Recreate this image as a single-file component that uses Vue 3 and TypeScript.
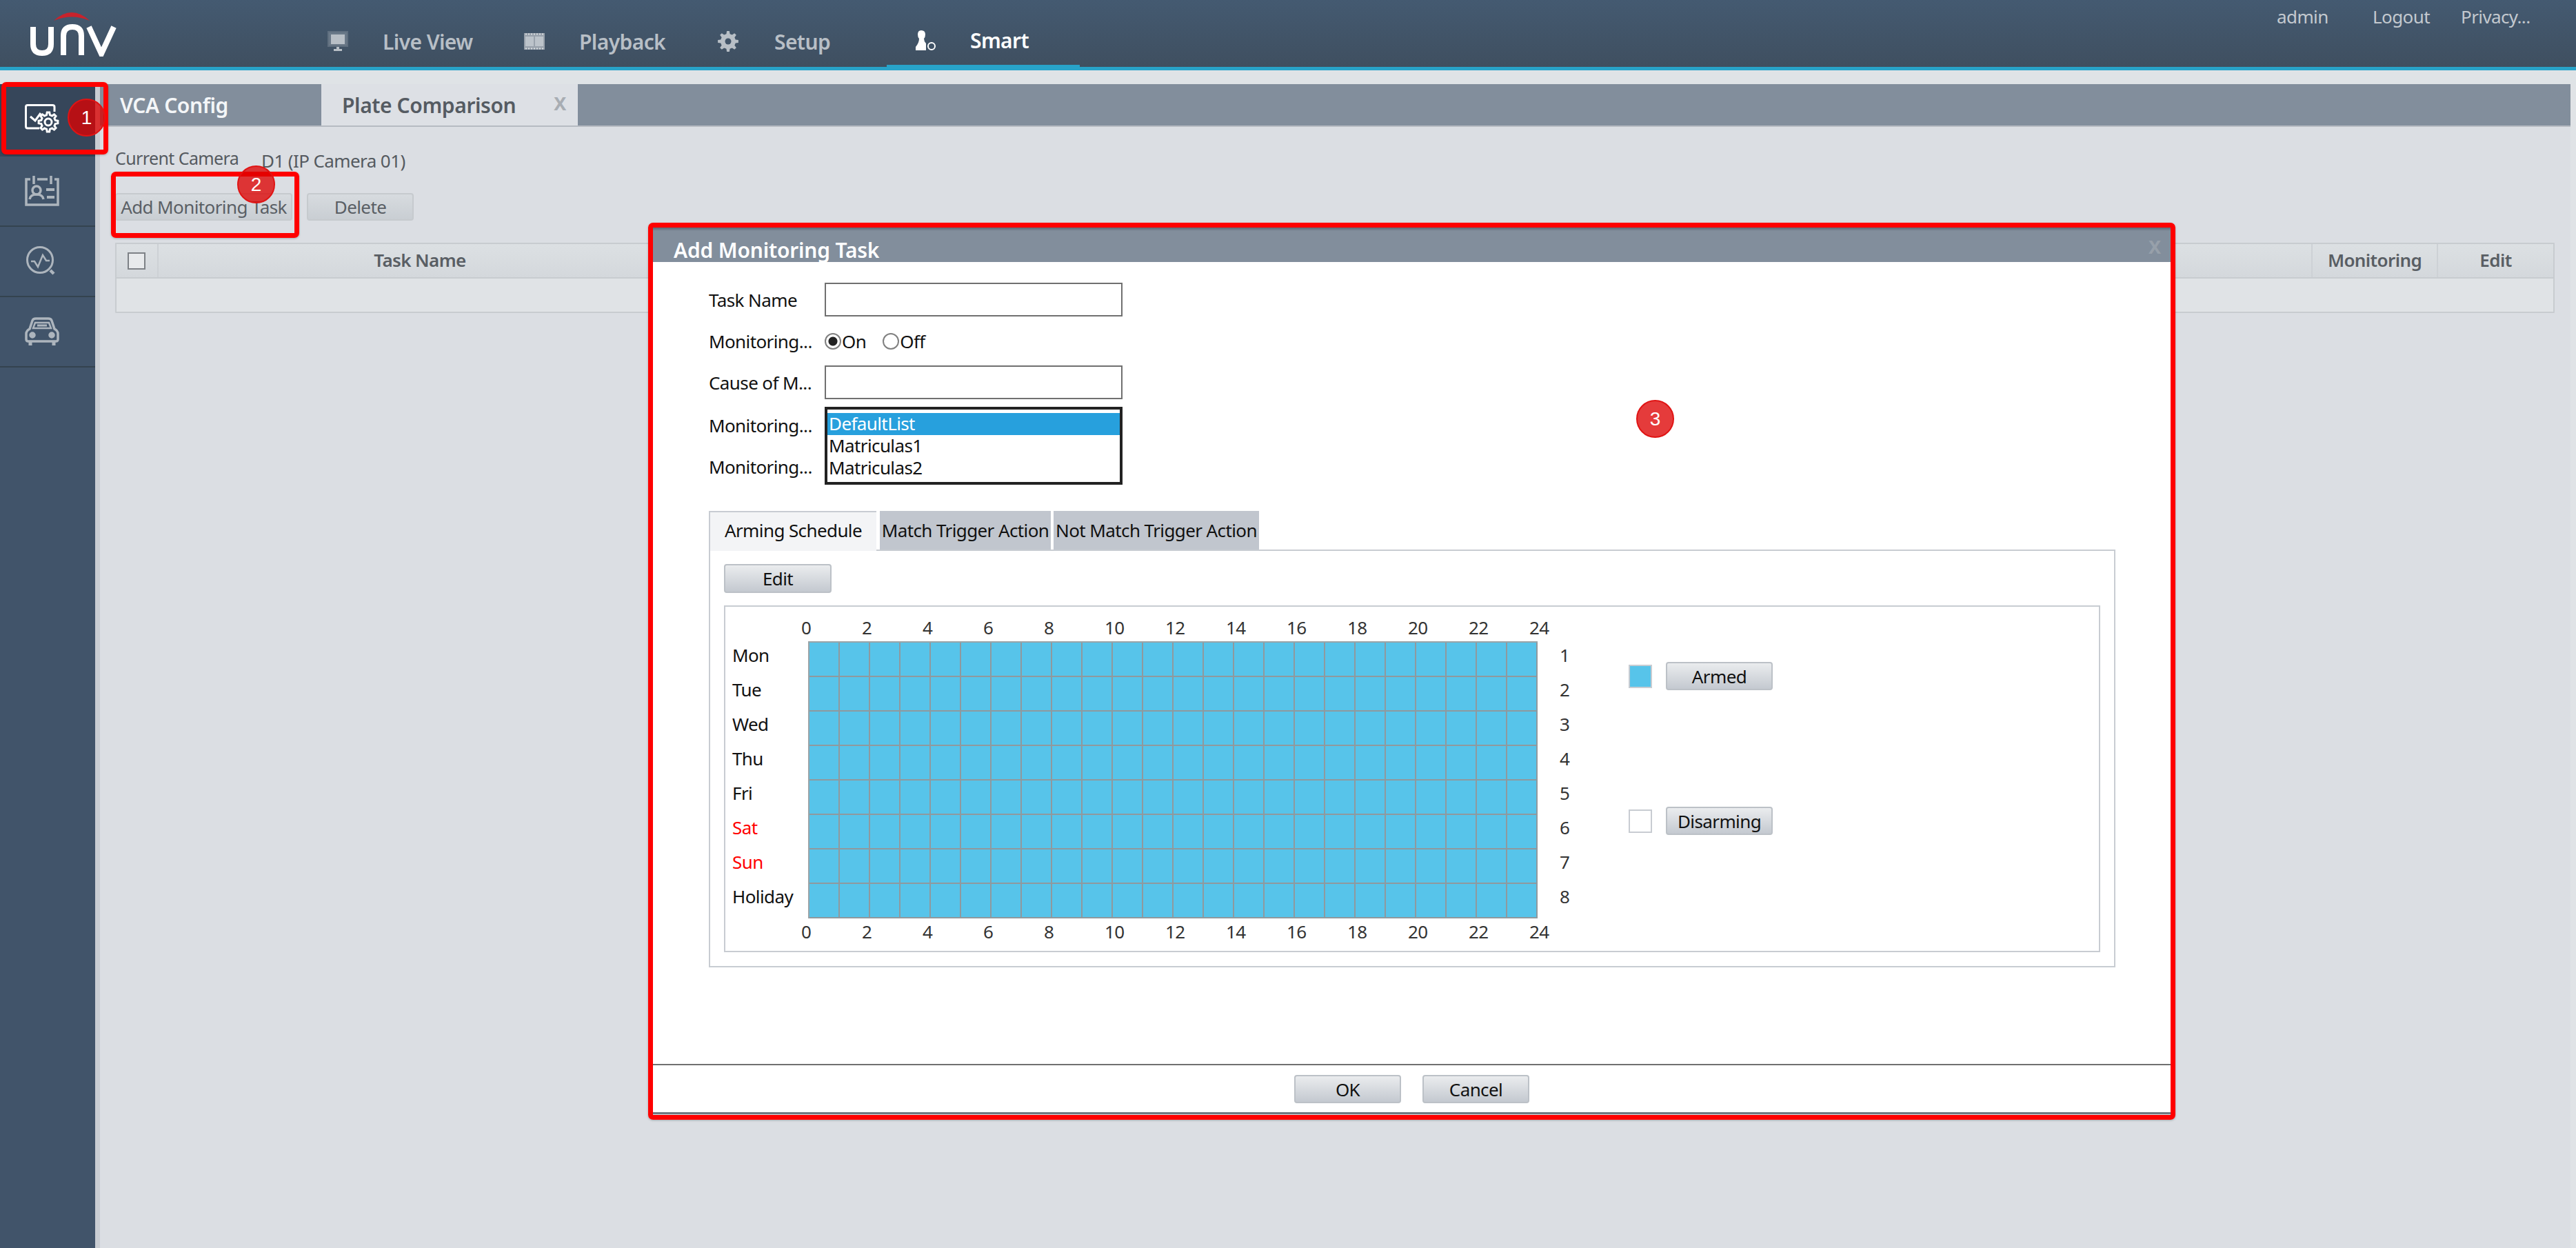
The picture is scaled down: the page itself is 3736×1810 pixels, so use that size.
<script setup lang="ts">
const days = [
  { name: "Mon", red: false },
  { name: "Tue", red: false },
  { name: "Wed", red: false },
  { name: "Thu", red: false },
  { name: "Fri", red: false },
  { name: "Sat", red: true },
  { name: "Sun", red: true },
  { name: "Holiday", red: false },
];
const hours = [0, 2, 4, 6, 8, 10, 12, 14, 16, 18, 20, 22, 24];
const cellCount = 24 * 8;

// toothed outline for the gear icons
const gearPath = (cx: number, cy: number, outer: number, inner: number, teeth: number) => {
  const pts: string[] = [];
  const step = (Math.PI * 2) / teeth;
  for (let i = 0; i < teeth; i++) {
    const a = i * step;
    const spots: [number, number][] = [
      [a - step * 0.3, inner],
      [a - step * 0.16, outer],
      [a + step * 0.16, outer],
      [a + step * 0.3, inner],
    ];
    for (const [ang, r] of spots) {
      pts.push(`${(cx + Math.cos(ang) * r).toFixed(2)} ${(cy + Math.sin(ang) * r).toFixed(2)}`);
    }
  }
  return `M${pts.join("L")}Z`;
};
</script>

<template>
  <div class="page">
    <header class="topbar">
      <div class="logo" aria-label="UNV logo">
        <svg width="126" height="64" viewBox="0 0 126 64">
          <path d="M35 12Q61 -12 87 12Q61 1 35 12Z" fill="#c8232c" />
          <path
            d="M5 21V46Q5 59 18 59Q31 59 31 46V21M49 62V34Q49 21 62 21Q75 21 75 34V62M86 21L104 60L122 21"
            fill="none"
            stroke="#fff"
            stroke-width="8"
          />
        </svg>
      </div>
      <nav class="nav">
        <a class="nav-item live">
          <svg width="30" height="30" viewBox="0 0 30 30">
            <path d="M1 1H29V22H1Z" fill="#e4e7ea" opacity=".25" stroke="#b8bfc6" stroke-width="2" />
            <path d="M5 5H25V19H5Z" fill="#b8bfc6" />
            <path d="M13 23H17V26H21V29H9V26H13Z" fill="#b8bfc6" />
          </svg>
          <span>Live View</span>
        </a>
        <a class="nav-item play">
          <svg width="30" height="24" viewBox="0 0 30 24">
            <path d="M0 0H30V24H0Z" fill="#99a2ac" />
            <path d="M2 5H14V19H2ZM16 5H28V19H16Z" fill="#bcc3ca" />
            <path d="M2 1.500H28M2 22.500H28" stroke="#d8dce0" stroke-width="2" stroke-dasharray="2 2" />
          </svg>
          <span>Playback</span>
        </a>
        <a class="nav-item setup">
          <svg width="30" height="30" viewBox="0 0 30 30">
            <path :d="gearPath(15, 15, 15, 11, 8)" fill="#b8bfc6" />
            <circle cx="15" cy="15" r="4.500" fill="#425468" />
          </svg>
          <span>Setup</span>
        </a>
        <a class="nav-item smart">
          <svg width="30" height="30" viewBox="0 0 30 30">
            <path d="M8 0Q14 0 14 6Q14 10 12 12Q12 16 15 19V29H0V24Q5 18 5 12Q3 10 3 6Q3 0 8 0Z" fill="#fff" />
            <circle cx="23" cy="23" r="5" fill="none" stroke="#fff" stroke-width="2" />
          </svg>
          <span>Smart</span>
        </a>
      </nav>
      <div class="user-links">
        <span class="admin">admin</span>
        <span class="logout">Logout</span>
        <span class="privacy">Privacy...</span>
      </div>
    </header>

    <div class="body">
      <aside class="sidebar">
        <div class="side-item active">
          <svg width="50" height="42" viewBox="0 0 50 42" fill="none" stroke="#fff" stroke-width="3">
            <path d="M21 35H4Q1.500 35 1.500 32V4Q1.500 1.500 4 1.500H40Q43 1.500 43 4V11" />
            <path d="M8 18L15 24L23 13" />
            <path :d="gearPath(34, 26, 14, 10.500, 8)" fill="#36465a" />
            <circle cx="34" cy="26" r="5" />
          </svg>
        </div>
        <div class="side-item">
          <svg width="50" height="44" viewBox="0 0 50 44" fill="none" stroke="#adb5bd" stroke-width="3.500">
            <path d="M8 5H2V42H48V5H43" />
            <path d="M13 0V12M38 0V12M18 5H33" />
            <circle cx="17" cy="21" r="6" />
            <path d="M7 34Q8 27 17 27Q26 27 27 34" />
            <path d="M31 20H43M32 31H43" stroke-width="4" />
          </svg>
        </div>
        <div class="side-item">
          <svg width="46" height="44" viewBox="0 0 46 44" fill="none" stroke="#adb5bd" stroke-width="3">
            <circle cx="20" cy="20" r="18.500" />
            <path d="M7 22H12L17 30L24 13L29 21H34" stroke-width="2.500" />
            <path d="M35 35L40 40" stroke-width="4.500" />
          </svg>
        </div>
        <div class="side-item">
          <svg width="50" height="42" viewBox="0 0 50 42" fill="none" stroke="#adb5bd" stroke-width="3.500">
            <path d="M2 32V24Q2 20 7 17L11 5Q12 2 16 2H34Q38 2 39 5L43 17Q48 20 48 24V32Q48 35 45 35H5Q2 35 2 32Z" />
            <path d="M12 16L15 8H35L38 16Z" stroke-width="2.500" />
            <path d="M18 12H32" stroke-width="3" />
            <circle cx="11" cy="26" r="3" fill="#adb5bd" />
            <circle cx="39" cy="26" r="3" fill="#adb5bd" />
            <path d="M8 36V41M42 36V41" stroke-width="5" />
          </svg>
        </div>
      </aside>

      <main class="main">
        <div class="tabbar">
          <div class="tab first">VCA Config</div>
          <div class="tab current">
            <span>Plate Comparison</span>
            <span class="tab-x">X</span>
          </div>
        </div>
        <div class="content">
          <div class="camera-row">
            <span class="cam-label">Current Camera</span>
            <span class="cam-value">D1 (IP Camera 01)</span>
          </div>
          <div class="action-row">
            <button class="btn page-btn add">Add Monitoring Task</button>
            <button class="btn page-btn del">Delete</button>
          </div>
          <div class="table">
            <div class="thead">
              <div class="th check-col"><i class="checkbox" /></div>
              <div class="th name-col">Task Name</div>
              <div class="th spacer-col" />
              <div class="th mon-col">Monitoring</div>
              <div class="th edit-col">Edit</div>
            </div>
            <div class="tbody" />
          </div>
        </div>
      </main>
    </div>

    <section class="dialog">
      <div class="dialog-title">
        <span>Add Monitoring Task</span>
        <span class="dialog-x">X</span>
      </div>
      <div class="dialog-body">
        <div class="form-row">
          <label>Task Name</label>
          <div class="input" />
        </div>
        <div class="form-row radio-row">
          <label>Monitoring...</label>
          <span class="radio on" /><span class="radio-text">On</span>
          <span class="radio off" /><span class="radio-text">Off</span>
        </div>
        <div class="form-row">
          <label>Cause of M...</label>
          <div class="input" />
        </div>
        <div class="form-row list-row">
          <div class="list-labels">
            <label>Monitoring...</label>
            <label>Monitoring...</label>
          </div>
          <div class="listbox">
            <div class="opt selected">DefaultList</div>
            <div class="opt">Matriculas1</div>
            <div class="opt">Matriculas2</div>
          </div>
        </div>

        <div class="inner-tabs">
          <div class="inner-tab active">Arming Schedule</div>
          <div class="inner-tab match">Match Trigger Action</div>
          <div class="inner-tab notmatch">Not Match Trigger Action</div>
        </div>
        <div class="panel">
          <button class="btn edit-btn">Edit</button>
          <div class="schedule">
            <div class="hours top">
              <span v-for="h in hours" :key="h">{{ h }}</span>
            </div>
            <div class="day-col">
              <div v-for="d in days" :key="d.name" :class="['day', { red: d.red }]">{{ d.name }}</div>
            </div>
            <div class="cells">
              <div v-for="n in cellCount" :key="n" class="cell" />
            </div>
            <div class="num-col">
              <div v-for="n in 8" :key="n" class="num">{{ n }}</div>
            </div>
            <div class="legend">
              <div class="legend-row">
                <span class="swatch armed" />
                <button class="btn legend-btn">Armed</button>
              </div>
              <div class="legend-row">
                <span class="swatch" />
                <button class="btn legend-btn">Disarming</button>
              </div>
            </div>
            <div class="hours bottom">
              <span v-for="h in hours" :key="h">{{ h }}</span>
            </div>
          </div>
        </div>
      </div>
      <div class="dialog-footer">
        <button class="btn foot-btn">OK</button>
        <button class="btn foot-btn">Cancel</button>
      </div>
    </section>

    <!-- tutorial markers drawn over the screenshot -->
    <div class="mark box-1" />
    <div class="mark box-2" />
    <div class="mark box-3" />
    <div class="dot dot-1">1</div>
    <div class="dot dot-2">2</div>
    <div class="dot dot-3">3</div>
  </div>
</template>

<style scoped>
.page {
  position: relative;
  width: 3736px;
  height: 1810px;
  display: flex;
  flex-direction: column;
  background: #dfe3e6;
  font-family: "Noto Sans", "Open Sans", sans-serif;
  font-size: 26px;
  letter-spacing: -0.6px;
  color: #111;
  overflow: hidden;
}

.topbar {
  position: relative;
  flex: none;
  height: 97px;
  border-bottom: 5px solid #28a3c9;
  background: linear-gradient(#445a71, #3f4f60);
  display: flex;
}
.logo {
  width: 475px;
  padding: 18px 0 0 43px;
  box-sizing: border-box;
}
.nav {
  display: flex;
  flex: 1;
  align-items: stretch;
}
.nav-item {
  display: flex;
  align-items: center;
  font-size: 30px;
  font-weight: 600;
  color: #b8bfc6;
  height: 97px;
  box-sizing: border-box;
  padding-top: 23px;
}
.nav-item svg {
  flex: none;
}
.nav-item span {
  margin-left: 50px;
}
.live { width: 285px; }
.play { width: 281px; }
.setup { width: 245px; }
.setup span { margin-left: 52px; }
.smart {
  color: #fff;
  border-bottom: 3px solid #28a3c9;
  padding-left: 42px;
  width: 280px;
}
.smart span { margin-left: 49px; }

.user-links {
  position: absolute;
  top: 6px;
  left: 3302px;
  display: flex;
  color: #c3c9cf;
  font-size: 26px;
}
.admin { width: 139px; }
.logout { width: 128px; }

.body {
  flex: 1;
  display: flex;
  padding-top: 20px;
  min-height: 0;
}
.sidebar {
  width: 138px;
  flex: none;
  background: #41546a;
}
.side-item {
  height: 100px;
  border-bottom: 2px solid #34434f;
  display: flex;
  align-items: center;
  justify-content: center;
  padding-right: 16px;
}
.side-item.active {
  height: 105px;
  background: #36465a;
  border-bottom: none;
  padding-bottom: 6px;
  box-sizing: border-box;
}
.main {
  flex: 1;
  display: flex;
  flex-direction: column;
  border-left: 7px solid #c9cdd3;
  border-right: 8px solid #e0e3e6;
  background: #dbdee3;
}
.tabbar {
  display: flex;
  height: 60px;
  background: #828e9c;
  border-bottom: 2px solid #b6bbc2;
  flex: none;
}
.tab {
  display: flex;
  align-items: center;
  font-size: 30px;
  font-weight: 600;
  letter-spacing: -0.4px;
}
.tab.first {
  width: 321px;
  padding-left: 29px;
  box-sizing: border-box;
  color: #f4f6f8;
}
.tab.current {
  width: 372px;
  padding-left: 30px;
  box-sizing: border-box;
  background: #dde0e5;
  color: #555b62;
}
.tab-x {
  margin-left: 55px;
  margin-bottom: 6px;
  color: #a8adb3;
  font-weight: 700;
  font-size: 27px;
}
.content {
  padding: 0 23px 0 22px;
  color: #555a60;
}
.camera-row {
  display: flex;
  height: 96px;
  font-size: 25px;
  padding-top: 28px;
  box-sizing: border-box;
}
.cam-label { width: 212px; }
.cam-value { margin-top: 3px; font-size: 26px; }
.action-row {
  display: flex;
  gap: 21px;
}
.btn {
  font: inherit;
  letter-spacing: inherit;
  padding: 0;
  box-sizing: border-box;
  border: 2px solid #bcc1c7;
  border-radius: 4px;
  background: linear-gradient(#eaecee, #c4c9d0);
  color: #111;
}
.page-btn {
  height: 40px;
  color: #5a5f65;
  background: linear-gradient(#d7dbdf, #c9ced3);
  border-color: #c6cace;
}
.add { width: 257px; }
.del { width: 155px; }

.table {
  margin-top: 32px;
  border: 2px solid #c8ccd0;
  border-radius: 1px;
}
.thead {
  display: flex;
  height: 48px;
  background: linear-gradient(#dce0e3, #d4d8dc);
  border-bottom: 2px solid #c8ccd0;
  font-weight: 600;
  color: #595e64;
}
.th {
  display: flex;
  align-items: center;
  justify-content: center;
  box-sizing: border-box;
  border-right: 2px solid #cdd1d5;
  padding-bottom: 2px;
}
.th:last-child { border-right: none; }
.check-col { width: 61px; justify-content: flex-start; padding-left: 16px; padding-bottom: 0; }
.name-col { width: 760px; }
.spacer-col { flex: 1; }
.mon-col { width: 182px; }
.edit-col { width: 167px; }
.checkbox {
  width: 26px;
  height: 25px;
  box-sizing: border-box;
  border: 2px solid #7d8186;
  background: #e8eaec;
}
.tbody {
  height: 48px;
  background: #e0e3e6;
}

.dialog {
  position: absolute;
  left: 947px;
  top: 330px;
  width: 2201px;
  height: 1286px;
  display: flex;
  flex-direction: column;
  background: #fff;
  border-bottom: 3px solid #6f7780;
  box-sizing: border-box;
}
.dialog-title {
  flex: none;
  height: 50px;
  background: linear-gradient(#5c6876 0, #828e9c 5px);
  color: #fff;
  font-size: 30px;
  font-weight: 600;
  letter-spacing: -0.2px;
  display: flex;
  justify-content: space-between;
  align-items: flex-end;
  padding: 0 14px 0 30px;
  line-height: 34px;
}
.dialog-x {
  color: #97a0aa;
  margin-bottom: 5px;
  font-size: 27px;
  font-weight: 700;
}
.dialog-body {
  flex: 1;
  padding: 30px 80px 0 81px;
  min-height: 0;
}
.form-row {
  display: flex;
  align-items: center;
  height: 49px;
}
.form-row label {
  width: 168px;
  flex: none;
  white-space: nowrap;
}
.input {
  width: 432px;
  height: 49px;
  box-sizing: border-box;
  border: 2px solid #707070;
}
.radio-row {
  height: 71px;
}
.radio {
  width: 24px;
  height: 24px;
  box-sizing: border-box;
  border: 2px solid #808080;
  border-radius: 50%;
  display: block;
}
.radio.on {
  background: radial-gradient(circle, #222 0 6px, #fff 7px);
}
.radio.off {
  margin-left: 24px;
}
.radio-text {
  margin-left: 1px;
}
.list-row {
  margin-top: 11px;
  height: 113px;
  align-items: flex-start;
}
.list-labels {
  display: flex;
  flex-direction: column;
  margin-top: -3px;
}
.list-labels label {
  height: 60px;
  line-height: 60px;
}
.listbox {
  width: 432px;
  height: 113px;
  box-sizing: border-box;
  border: 4px solid #222;
  padding-top: 5px;
  overflow: hidden;
}
.opt {
  height: 32px;
  line-height: 31px;
  padding-left: 2px;
}
.opt.selected {
  background: #27a0dd;
  color: #fff;
}
.inner-tabs {
  display: flex;
  margin-top: 38px;
  height: 56px;
}
.inner-tab {
  display: flex;
  align-items: center;
  justify-content: center;
  box-sizing: border-box;
  background: #c1c6ce;
  white-space: nowrap;
  font-size: 26px;
}
.inner-tab.active {
  width: 243px;
  background: #f3f4f6;
  border: 2px solid #c8ccd2;
  border-bottom: none;
  border-right: none;
  position: relative;
  z-index: 1;
  margin-bottom: -2px;
  height: 58px;
  padding-bottom: 4px;
}
.match { width: 248px; margin-left: 5px; }
.notmatch { width: 298px; margin-left: 4px; }
.panel {
  height: 606px;
  box-sizing: border-box;
  border: 2px solid #c8ccd2;
  padding: 19px 20px 20px;
}
.edit-btn {
  display: block;
  width: 156px;
  height: 42px;
}
.schedule {
  margin-top: 18px;
  height: 503px;
  box-sizing: border-box;
  border: 2px solid #c8ccd2;
  padding-left: 10px;
  display: grid;
  grid-template-columns: 110px 1058px 132px 1fr;
  grid-template-rows: 50px 402px 49px;
}
.hours {
  grid-column: 2 / 4;
  display: flex;
  margin-left: -10px;
  color: #333;
}
.hours span {
  flex: none;
  width: 88px;
}
.hours.top {
  grid-row: 1;
  padding-top: 12px;
  line-height: 36px;
}
.hours.bottom {
  grid-row: 3;
  line-height: 38px;
}
.day-col {
  grid-row: 2;
  grid-column: 1;
}
.day {
  height: 50px;
  line-height: 40px;
}
.day.red { color: #f00; }
.cells {
  grid-row: 2;
  grid-column: 2;
  display: grid;
  grid-template-columns: repeat(24, 44px);
  grid-auto-rows: 50px;
  border-left: 2px solid #9aa4a8;
  border-top: 2px solid #9aa4a8;
}
.cell {
  box-sizing: border-box;
  background: #57c4ea;
  border-right: 2px solid #8f999e;
  border-bottom: 2px solid #8f999e;
}
.num-col {
  grid-row: 2;
  grid-column: 3;
  padding-left: 32px;
  color: #333;
}
.num {
  height: 50px;
  line-height: 40px;
}
.legend {
  grid-row: 1 / 4;
  grid-column: 4;
  padding-top: 80px;
  display: flex;
  flex-direction: column;
  gap: 169px;
}
.legend-row {
  display: flex;
  align-items: center;
  gap: 20px;
}
.swatch {
  width: 34px;
  height: 34px;
  box-sizing: border-box;
  border: 2px solid #c8ccd2;
  background: #fff;
}
.swatch.armed { background: #57c4ea; }
.legend-btn {
  width: 155px;
  height: 41px;
}
.dialog-footer {
  flex: none;
  height: 70px;
  border-top: 2px solid #707070;
  display: flex;
  justify-content: center;
  gap: 31px;
  padding-top: 14px;
  box-sizing: border-box;
}
.foot-btn {
  width: 155px;
  height: 41px;
}

.mark {
  position: absolute;
  box-sizing: border-box;
  border: 7px solid #f00;
  border-radius: 7px;
  box-shadow: 0 1px 3px rgba(0, 0, 0, 0.25);
}
.box-1 { left: 2px; top: 119px; width: 155px; height: 105px; }
.box-2 { left: 161px; top: 249px; width: 273px; height: 96px; }
.box-3 { left: 940px; top: 323px; width: 2215px; height: 1301px; }
.dot {
  position: absolute;
  width: 55px;
  height: 55px;
  box-sizing: border-box;
  border: 2px solid #e01414;
  border-radius: 50%;
  background: rgba(221, 0, 0, 0.77);
  color: #fff;
  font-family: "Liberation Sans", sans-serif;
  font-size: 28px;
  letter-spacing: 0;
  display: flex;
  align-items: center;
  justify-content: center;
}
.dot-1 { left: 98px; top: 143px; }
.dot-2 { left: 344px; top: 240px; }
.dot-3 { left: 2373px; top: 580px; }
</style>

<style>
html,
body {
  margin: 0;
  overflow: hidden;
}
</style>
